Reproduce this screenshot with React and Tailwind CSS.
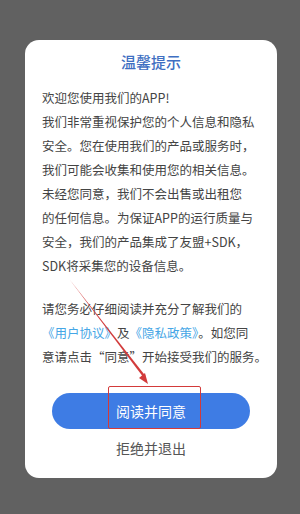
export default function App() {
  const body = [
    '欢迎您使用我们的APP!',
    '我们非常重视保护您的个人信息和隐私',
    '安全。您在使用我们的产品或服务时，',
    '我们可能会收集和使用您的相关信息。',
    '未经您同意，我们不会出售或出租您',
    '的任何信息。为保证APP的运行质量与',
    '安全，我们的产品集成了友盟+SDK，',
    'SDK将采集您的设备信息。',
  ];

  return (
    <div
      className="relative w-[300px] h-[514px] bg-[#616161] pt-[40px] px-[25px]"
      style={{ fontFamily: '"Noto Sans CJK SC", "Noto Sans", sans-serif' }}
    >
      <div className="relative w-[252px] h-[438px] bg-white rounded-[14px] pt-[46px]">
        {/* title */}
        <div className="absolute top-[11px] left-0 right-0 text-center text-[15px] leading-[22px] font-medium text-[#3f6fc2]">
          温馨提示
        </div>

        <div className="pl-[17px] pr-[18px] text-[12.5px] leading-[24px] text-[#444] whitespace-nowrap">
          {body.map((l, i) => (
            <div key={i}>{l}</div>
          ))}
          <div className="mt-[19px]">请您务必仔细阅读并充分了解我们的</div>
          <div>
            <span className="text-[#45a6e6]">《用户协议》</span>及
            <span className="text-[#45a6e6]">《隐私政策》</span>。如您同
          </div>
          <div>意请点击“同意”开始接受我们的服务。</div>
        </div>

        <div className="mt-[24px] mx-[27px] h-[36px] rounded-full bg-[#3e7ce4] flex items-center justify-center text-white text-[14px]">
          阅读并同意
        </div>
        <div className="mt-[9px] text-center text-[14px] leading-[20px] text-[#555]">拒绝并退出</div>

        {/* highlight box */}
        <div className="absolute left-[83px] top-[346px] w-[93px] h-[43px] border-[1.5px] border-[#d33a3a] rounded-[2px]" />
      </div>

      {/* annotation arrow */}
      <svg className="absolute left-0 top-0" width="300" height="514" viewBox="0 0 300 514">
        <polygon points="70,280 145.5,376 143.5,377.6" fill="#d23b3b" />
        <polygon points="148,384 139,378 145,373" fill="#d23b3b" />
      </svg>
    </div>
  );
}
